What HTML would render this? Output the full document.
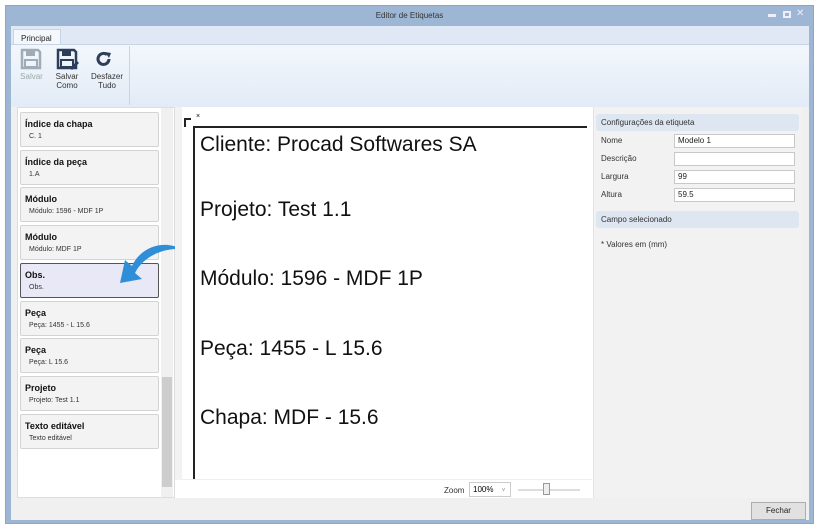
<!DOCTYPE html>
<html><head><meta charset="utf-8"><style>
*{margin:0;padding:0;box-sizing:border-box}
body{width:819px;height:529px;background:#fff;font-family:"Liberation Sans",sans-serif;position:relative;overflow:hidden}
.a{position:absolute}
.win{left:5px;top:5px;width:809px;height:519px;background:#9db6d4;border:1px solid #8ba6c8}
.card{position:absolute;left:20px;width:139px;height:35px;background:#f3f3f3;border:1px solid #d3d3d3;border-radius:2px}
.card b{position:absolute;left:4px;top:6px;font-size:9px;color:#111}
.card span{position:absolute;left:8px;top:20px;font-size:7px;color:#333}
.lab{font-size:30px;color:#111}
.rl{font-size:8px;color:#333;position:absolute;left:601px}
.in{position:absolute;left:674px;width:121px;height:14px;background:#fff;border:1px solid #c8c8c8;font-size:8px;padding-left:3px;line-height:12px;color:#222}
.hd{position:absolute;left:596px;width:203px;height:17px;background:#dde6f1;border-radius:3px;font-size:8px;color:#333;padding-left:5px;line-height:17px}
</style></head><body>
<div class="a win"></div>
<div class="a" style="left:0;top:11px;width:819px;text-align:center;font-size:8px;color:#333">Editor de Etiquetas</div>
<div class="a" style="left:768px;top:14px;width:8px;height:3px;background:#eef"></div>
<div class="a" style="left:783px;top:11px;width:8px;height:7px;border:2px solid #eef"></div>
<div class="a" style="left:796px;top:8px;font-size:10px;color:#eef">✕</div>
<div class="a" style="left:11px;top:26px;width:798px;height:18px;background:#dfe8f4"></div>
<div class="a" style="left:13px;top:29px;width:48px;height:16px;background:#f4f8fc;border:1px solid #c6d4e6;border-bottom:none;font-size:8px;color:#222;padding:4px 0 0 7px">Principal</div>
<div class="a" style="left:11px;top:44px;width:798px;height:63px;background:linear-gradient(#f3f7fc,#e2ebf6);border-top:1px solid #c6d4e6"></div>
<div class="a" style="left:129px;top:46px;width:1px;height:59px;background:#c6d4e6"></div>
<svg class="a" style="left:20px;top:48px" width="22" height="22"><path d="M2 2h16l2 2v16H2z" fill="none" stroke="#a0abb8" stroke-width="2.5"/><rect x="6" y="3" width="9" height="5" fill="#a0abb8"/><rect x="5" y="12" width="12" height="7" fill="none" stroke="#a0abb8" stroke-width="2"/></svg>
<svg class="a" style="left:56px;top:48px" width="24" height="24"><path d="M2 2h16l2 2v16H2z" fill="none" stroke="#2c3e5c" stroke-width="2.5"/><rect x="6" y="3" width="9" height="5" fill="#2c3e5c"/><rect x="5" y="12" width="12" height="7" fill="none" stroke="#2c3e5c" stroke-width="2"/><path d="M14 20l7-7 2 2-7 7z" fill="#2c3e5c"/></svg>
<svg class="a" style="left:95px;top:50px" width="18" height="18"><path d="M14 9a5.5 5.5 0 1 1-2-4.3" fill="none" stroke="#2c3e5c" stroke-width="3"/><path d="M10 2l6 1-2 5z" fill="#2c3e5c"/></svg>
<div class="a" style="left:18px;top:72px;font-size:8px;color:#9aa;text-align:center;width:27px">Salvar</div>
<div class="a" style="left:53px;top:72px;font-size:8px;color:#333;text-align:center;width:28px;line-height:9px">Salvar<br>Como</div>
<div class="a" style="left:88px;top:72px;font-size:8px;color:#333;text-align:center;width:38px;line-height:9px">Desfazer<br>Tudo</div>
<div class="a" style="left:11px;top:107px;width:798px;height:391px;background:#f0f0f0"></div>
<div class="a" style="left:17px;top:107px;width:158px;height:391px;background:#fff;border:1px solid #ddd"></div>
<div class="a" style="left:161px;top:108px;width:12px;height:389px;background:#f0f0f0"></div>
<div class="a" style="left:162px;top:377px;width:10px;height:110px;background:#cdcdcd"></div>
<div class="card" style="top:112px"><b>Índice da chapa</b><span>C. 1</span></div>
<div class="card" style="top:150px"><b>Índice da peça</b><span>1.A</span></div>
<div class="card" style="top:187px"><b>Módulo</b><span>Módulo: 1596 - MDF 1P</span></div>
<div class="card" style="top:225px"><b>Módulo</b><span>Módulo: MDF 1P</span></div>
<div class="card" style="top:263px;background:#e8e8f6;border-color:#555"><b>Obs.</b><span>Obs.</span></div>
<div class="card" style="top:301px"><b>Peça</b><span>Peça: 1455 - L 15.6</span></div>
<div class="card" style="top:338px"><b>Peça</b><span>Peça: L 15.6</span></div>
<div class="card" style="top:376px"><b>Projeto</b><span>Projeto: Test 1.1</span></div>
<div class="card" style="top:414px"><b>Texto editável</b><span>Texto editável</span></div>
<svg class="a" style="left:110px;top:240px" width="75" height="45"><path d="M72 9C52 -1 30 8 22 26l-7-6-5 23 22-4-7-6C33 17 52 8 72 9z" fill="#2e8fd8"/></svg>
<div class="a" style="left:175px;top:107px;width:418px;height:391px;background:#fff"></div>
<div class="a" style="left:175px;top:107px;width:7px;height:373px;background:#f2f2f2"></div>
<div class="a" style="left:182px;top:479px;width:410px;height:1px;background:#eee"></div>
<div class="a" style="left:193px;top:126px;width:394px;height:2px;background:#222"></div>
<div class="a" style="left:193px;top:126px;width:2px;height:353px;background:#222"></div>
<div class="a" style="left:184px;top:118px;width:7px;height:2px;background:#222"></div>
<div class="a" style="left:184px;top:118px;width:2px;height:9px;background:#222"></div>
<div class="a" style="left:196px;top:113px;font-size:7px">×</div>
<div class="a lab" style="left:200px;top:133px;font-size:21px">Cliente: Procad Softwares SA</div>
<div class="a lab" style="left:200px;top:198px;font-size:21px">Projeto: Test 1.1</div>
<div class="a lab" style="left:200px;top:267px;font-size:21px">Módulo: 1596 - MDF 1P</div>
<div class="a lab" style="left:200px;top:337px;font-size:21px">Peça: 1455 - L 15.6</div>
<div class="a lab" style="left:200px;top:406px;font-size:21px">Chapa: MDF - 15.6</div>
<div class="a" style="left:444px;top:486px;font-size:8px;color:#333">Zoom</div>
<div class="a" style="left:469px;top:482px;width:42px;height:15px;background:#fff;border:1px solid #ccc;font-size:8px;padding:2px 0 0 3px">100% <span style="font-size:6px;color:#888;margin-left:6px">˅</span></div>
<div class="a" style="left:518px;top:489px;width:62px;height:2px;background:#ddd"></div>
<div class="a" style="left:543px;top:483px;width:7px;height:12px;background:#eee;border:1px solid #999"></div>
<div class="a" style="left:593px;top:107px;width:209px;height:391px;background:#f2f2f2;border-left:1px solid #e2e2e2"></div>
<div class="hd" style="top:114px">Configurações da etiqueta</div>
<div class="rl" style="top:136px">Nome</div><div class="in" style="top:134px">Modelo 1</div>
<div class="rl" style="top:154px">Descrição</div><div class="in" style="top:152px"></div>
<div class="rl" style="top:172px">Largura</div><div class="in" style="top:170px">99</div>
<div class="rl" style="top:190px">Altura</div><div class="in" style="top:188px">59.5</div>
<div class="hd" style="top:211px">Campo selecionado</div>
<div class="rl" style="top:240px">* Valores em (mm)</div>
<div class="a" style="left:11px;top:498px;width:798px;height:22px;background:#f0f0f0"></div>
<div class="a" style="left:751px;top:502px;width:55px;height:18px;background:#e1e1e1;border:1px solid #adadad;font-size:8px;text-align:center;line-height:16px;color:#222">Fechar</div>
</body></html>
